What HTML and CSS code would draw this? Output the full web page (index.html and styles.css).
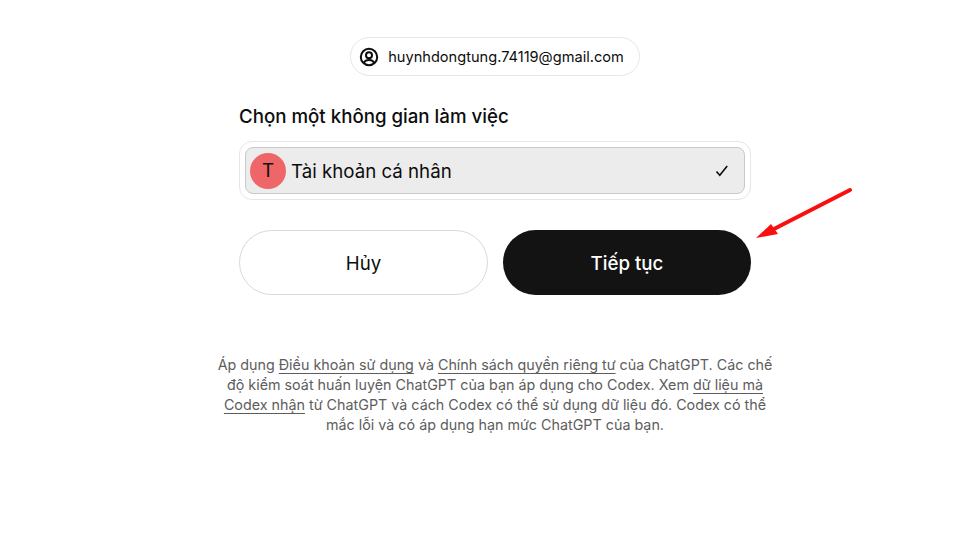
FILE: index.html
```html
<!DOCTYPE html>
<html>
<head>
    <meta charset="utf-8">
    <title>Chọn một không gian làm việc</title>
    <link rel="stylesheet" href="styles.css">
</head>

<body>
    <div class="container">
        <div class="account">
            <svg class="account-icon" viewBox="0 0 20 20" width="20" height="20" fill="none" stroke="#0d0d0d" stroke-width="2">
                <circle cx="10" cy="10" r="8.200"/>
                <circle cx="10" cy="8.200" r="3"/>
                <path d="M4.800 15.800c1-2 3-2.900 5.200-2.900s4.200.9 5.200 2.900"/>
            </svg>
            <span>huynhdongtung.74119@gmail.com</span>
        </div>

        <div class="title">Chọn một không gian làm việc</div>

        <div class="list">
            <div class="item">
                <div class="avatar">T</div>
                <div class="item-name">Tài khoản cá nhân</div>
                <svg class="check" viewBox="0 0 16 16" width="16" height="16" fill="none" stroke="#0d0d0d" stroke-width="1.600">
                    <path d="M2.500 8.500l3.300 3.700 7.400-9.200"/>
                </svg>
            </div>
        </div>

        <div class="buttons">
            <div class="button cancel">Hủy</div>
            <div class="button primary">Tiếp tục</div>
        </div>

        <p class="legal">Áp dụng <a href="#">Điều khoản sử dụng</a> và <a href="#">Chính sách quyền riêng tư</a> của ChatGPT. Các chế độ kiểm soát huấn luyện ChatGPT của bạn áp dụng cho Codex. Xem <a href="#">dữ liệu mà Codex nhận</a> từ ChatGPT và cách Codex có thể sử dụng dữ liệu đó. Codex có thể mắc lỗi và có áp dụng hạn mức ChatGPT của bạn.</p>
    </div>

    <!-- annotation drawn over the page -->
    <svg class="arrow" viewBox="0 0 979 538" width="979" height="538">
        <line x1="850" y1="190" x2="772" y2="230" stroke="#f90f0f" stroke-width="4" stroke-linecap="round"/>
        <polygon points="756,238 771,224 778,234" fill="#f90f0f"/>
    </svg>
</body>
</html>
```

FILE: styles.css
```css
body {
    margin: 0;
    padding: 0;
    height: 538px;
    overflow: hidden;
    background-color: #fff;
    color: #0d0d0d;
    font-family: Inter, "Noto Sans", sans-serif;
}

.container {
    display: flex;
    flex-direction: column;
    align-items: center;
    width: 512px;
    margin-left: 239px;
    padding-top: 37px;
}

.account {
    display: flex;
    align-items: center;
    gap: 9px;
    height: 37px;
    padding: 0 15px 0 8px;
    border: 1px solid #e6e6e6;
    border-radius: 20px;
    font-size: 14.600px;
}

.account-icon {
    flex-shrink: 0;
}

.title {
    align-self: flex-start;
    margin-top: 28px;
    font-size: 18.700px;
    line-height: 26px;
    font-weight: 500;
}

.list {
    box-sizing: border-box;
    width: 100%;
    margin-top: 11px;
    padding: 5px;
    border: 1px solid #e6e6e6;
    border-radius: 13px;
}

.item {
    display: flex;
    align-items: center;
    height: 45px;
    padding: 0 14px 0 4px;
    background-color: #ececec;
    border: 1px solid #c9c9c9;
    border-radius: 8px;
}

.avatar {
    display: flex;
    justify-content: center;
    align-items: center;
    width: 36px;
    height: 36px;
    border-radius: 50%;
    background-color: #ef6669;
    font-size: 18.700px;
}

.item-name {
    flex: 1;
    margin-left: 5px;
    padding-top: 1px;
    font-size: 18.700px;
}

.buttons {
    display: grid;
    grid-template-columns: 249px 248px;
    gap: 15px;
    width: 100%;
    margin-top: 30px;
}

.button {
    box-sizing: border-box;
    display: flex;
    justify-content: center;
    align-items: center;
    height: 65px;
    padding-top: 2px;
    border-radius: 33px;
    font-size: 18.700px;
    font-weight: 500;
    cursor: pointer;
}

.cancel {
    border: 1px solid #d9d9d9;
    font-weight: 400;
}

.primary {
    background-color: #131313;
    color: #fff;
}

.legal {
    width: 560px;
    margin: 60px 0 0;
    text-align: center;
    font-size: 14.320px;
    line-height: 20px;
    color: #5d5d5d;
}

.legal a {
    color: #5d5d5d;
    text-decoration: underline;
    text-underline-offset: 3px;
}

.arrow {
    position: absolute;
    left: 0;
    top: 0;
    pointer-events: none;
}
```
